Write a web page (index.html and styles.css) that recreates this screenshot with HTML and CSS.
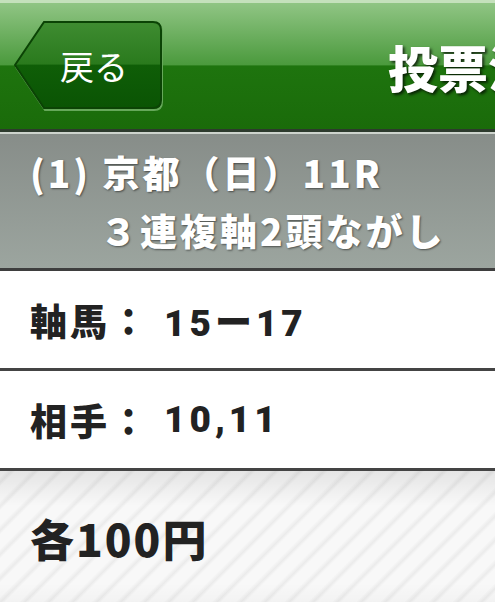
FILE: index.html
```html
<!DOCTYPE html>
<html lang="ja">
<head>
  <meta charset="UTF-8">
  <title>投票済み</title>
  <link rel="stylesheet" href="styles.css">
</head>
<body>
  <div class="topbar">
    <a class="back-btn" href="#">
      <svg class="back-shape" width="150" height="90" viewBox="0 0 150 90">
        <defs>
          <linearGradient id="btnFill" x1="0" y1="0" x2="0" y2="1">
            <stop offset="0" stop-color="#3f8c31"/>
            <stop offset="0.49" stop-color="#2a7a1d"/>
            <stop offset="0.5" stop-color="#0f5e07"/>
            <stop offset="1" stop-color="#0a5404"/>
          </linearGradient>
        </defs>
        <path d="M2 46 L31 3 H140 Q148 3 148 11 V81 Q148 89 140 89 H31 Z" fill="none" stroke="#66a85a" stroke-width="2"/>
        <path d="M1 44 L30 1 H139 Q147 1 147 9 V79 Q147 87 139 87 H30 Z" fill="url(#btnFill)" stroke="#0b4305" stroke-width="2"/>
      </svg>
      <span class="back-label">戻る</span>
    </a>
    <h1 class="title">投票済み内容</h1>
  </div>

  <div class="race-info">
    <div class="race-line">(1) 京都（日）11R</div>
    <div class="race-line indent">３連複軸2頭ながし</div>
  </div>

  <div class="row"><span class="key">軸馬：</span><span class="val">15ー17</span></div>
  <div class="row"><span class="key">相手：</span><span class="val">10,11</span></div>

  <div class="amount">各100円</div>
</body>
</html>
```

FILE: styles.css
```css
html, body {
  margin: 0;
  padding: 0;
  font-family: "Noto Sans CJK JP", "Roboto", sans-serif;
  background: #fff;
  overflow: hidden;
}

.topbar {
  display: flex;
  align-items: center;
  height: 126px;
  border-top: 3px solid #c5e1bc;
  border-bottom: 3px solid #2d3a2d;
  background: linear-gradient(#90c584, #4b9a3d 49%, #1e740e 50%, #1a6b0a 100%);
  white-space: nowrap;
  overflow: hidden;
}

.back-btn {
  position: relative;
  flex: none;
  width: 150px;
  height: 90px;
  margin-left: 14px;
  text-decoration: none;
}

.back-shape {
  position: absolute;
  left: 0;
  top: 0;
}

.back-label {
  position: relative;
  display: block;
  padding-left: 46px;
  line-height: 90px;
  font-size: 34px;
  color: #fff;
}

.title {
  margin: 0 0 0 224px;
  font-size: 50px;
  font-weight: 900;
  color: #fff;
  text-shadow: 2px 2px 3px rgba(0, 0, 0, 0.7);
}

.race-info {
  height: 116px;
  padding: 9px 0 9px 30px;
  border-top: 2px solid #cdd3cd;
  border-bottom: 3px solid #3e3e3e;
  background: linear-gradient(#878d89, #9ca59f);
}

.race-line {
  line-height: 58px;
  font-size: 37px;
  font-weight: 900;
  letter-spacing: 3px;
  color: #fff;
  text-shadow: 1px 1px 2px rgba(0, 0, 0, 0.5);
}

.race-line.indent {
  padding-left: 70px;
}

.row {
  display: flex;
  align-items: center;
  height: 97px;
  padding-left: 30px;
  border-bottom: 3px solid #444;
  font-size: 37px;
  font-weight: 900;
  color: #222;
  letter-spacing: 3px;
}

.row:first-of-type {
  height: 99px;
}

.val {
  margin-left: 14px;
  font-family: "Roboto", "Noto Sans CJK JP", sans-serif;
  letter-spacing: 4px;
}

.amount {
  height: 160px;
  padding: 42px 0 0 30px;
  box-sizing: border-box;
  line-height: 50px;
  font-size: 44px;
  font-weight: 900;
  letter-spacing: 2px;
  color: #222;
  background:
    linear-gradient(rgba(0, 0, 0, 0.08), rgba(0, 0, 0, 0) 22%, rgba(0, 0, 0, 0) 70%, rgba(0, 0, 0, 0.06)),
    repeating-linear-gradient(-45deg, #f8f8f8 0, #f8f8f8 10px, #ebebeb 13px, #f8f8f8 17px);
}
```
